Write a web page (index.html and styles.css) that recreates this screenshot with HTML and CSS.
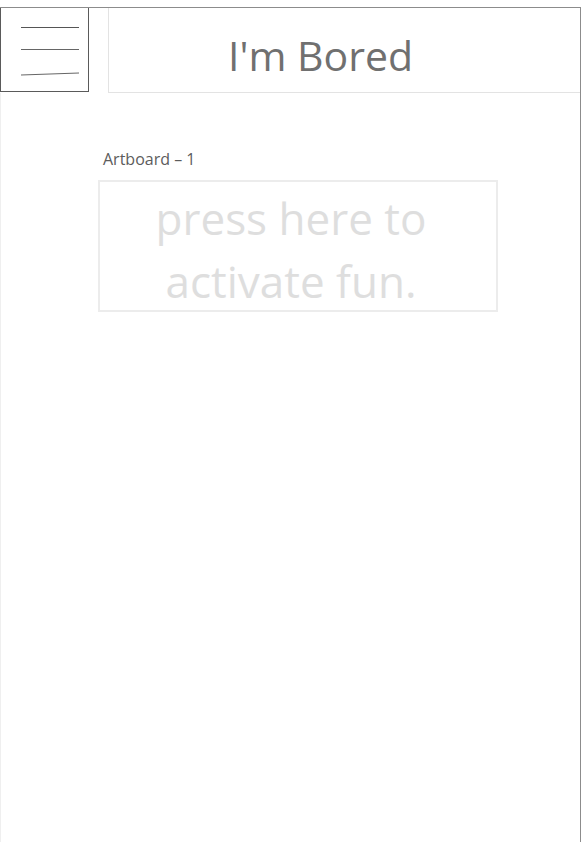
FILE: index.html
```html
<!DOCTYPE html>
<html>
<head>
<meta charset="utf-8">
<link rel="stylesheet" href="styles.css">
</head>
<body>
<div class="frame">
  <header class="header">
    <div class="menu">
      <svg width="89" height="84" viewBox="0 0 89 84">
        <line x1="21" y1="19.5" x2="79" y2="19.5" stroke="#555" stroke-width="1"/>
        <line x1="21" y1="41.5" x2="79" y2="41.5" stroke="#666" stroke-width="1"/>
        <line x1="21" y1="67" x2="79" y2="65" stroke="#666" stroke-width="1"/>
      </svg>
    </div>
    <div class="title-box"><h1 class="title">I'm Bored</h1></div>
  </header>
  <main class="main">
    <div class="label">Artboard – 1</div>
    <button class="fun-btn">press here to<br>activate fun.</button>
  </main>
</div>
</body>
</html>
```
FILE: styles.css
```css
html, body {
  margin: 0;
  padding: 0;
  background: #fff;
}
body {
  font-family: "Open Sans", "Noto Sans", sans-serif;
}
.frame {
  margin-top: 7px;
  width: 580px;
  height: 835px;
  border-top: 1px solid #8c8c8c;
  border-right: 1px solid #8c8c8c;
  display: flex;
  flex-direction: column;
}
.header {
  display: flex;
  gap: 19px;
  height: 85px;
}
.menu {
  width: 87px;
  height: 83px;
  border: 1px solid #5a5a5a;
  border-top: none;
  position: relative;
  box-sizing: content-box;
}
.menu svg {
  position: absolute;
  left: -1px;
  top: 0;
}
.title-box {
  flex: 1;
  height: 84px;
  border: 1px solid #e3e3e3;
  border-top: none;
  border-right: none;
  display: flex;
  justify-content: center;
  align-items: center;
}
.title {
  margin: 0;
  font-weight: 400;
  font-size: 41px;
  color: #707070;
  padding-right: 48px;
  padding-top: 10px;
  line-height: 1;
}
.main {
  flex: 1;
  border-left: 1px solid #efefef;
  padding-left: 97px;
  padding-top: 56px;
}
.label {
  font-size: 16px;
  color: #5c5c5c;
  margin-left: 5px;
  line-height: 20px;
}
.fun-btn {
  margin-top: 11px;
  width: 400px;
  height: 132px;
  border: 2px solid #ececec;
  background: #fff;
  font-family: "Open Sans", "Noto Sans", sans-serif;
  font-size: 44px;
  line-height: 63px;
  color: #dedede;
  padding: 5px 14px 0 0;
  display: block;
}
```
